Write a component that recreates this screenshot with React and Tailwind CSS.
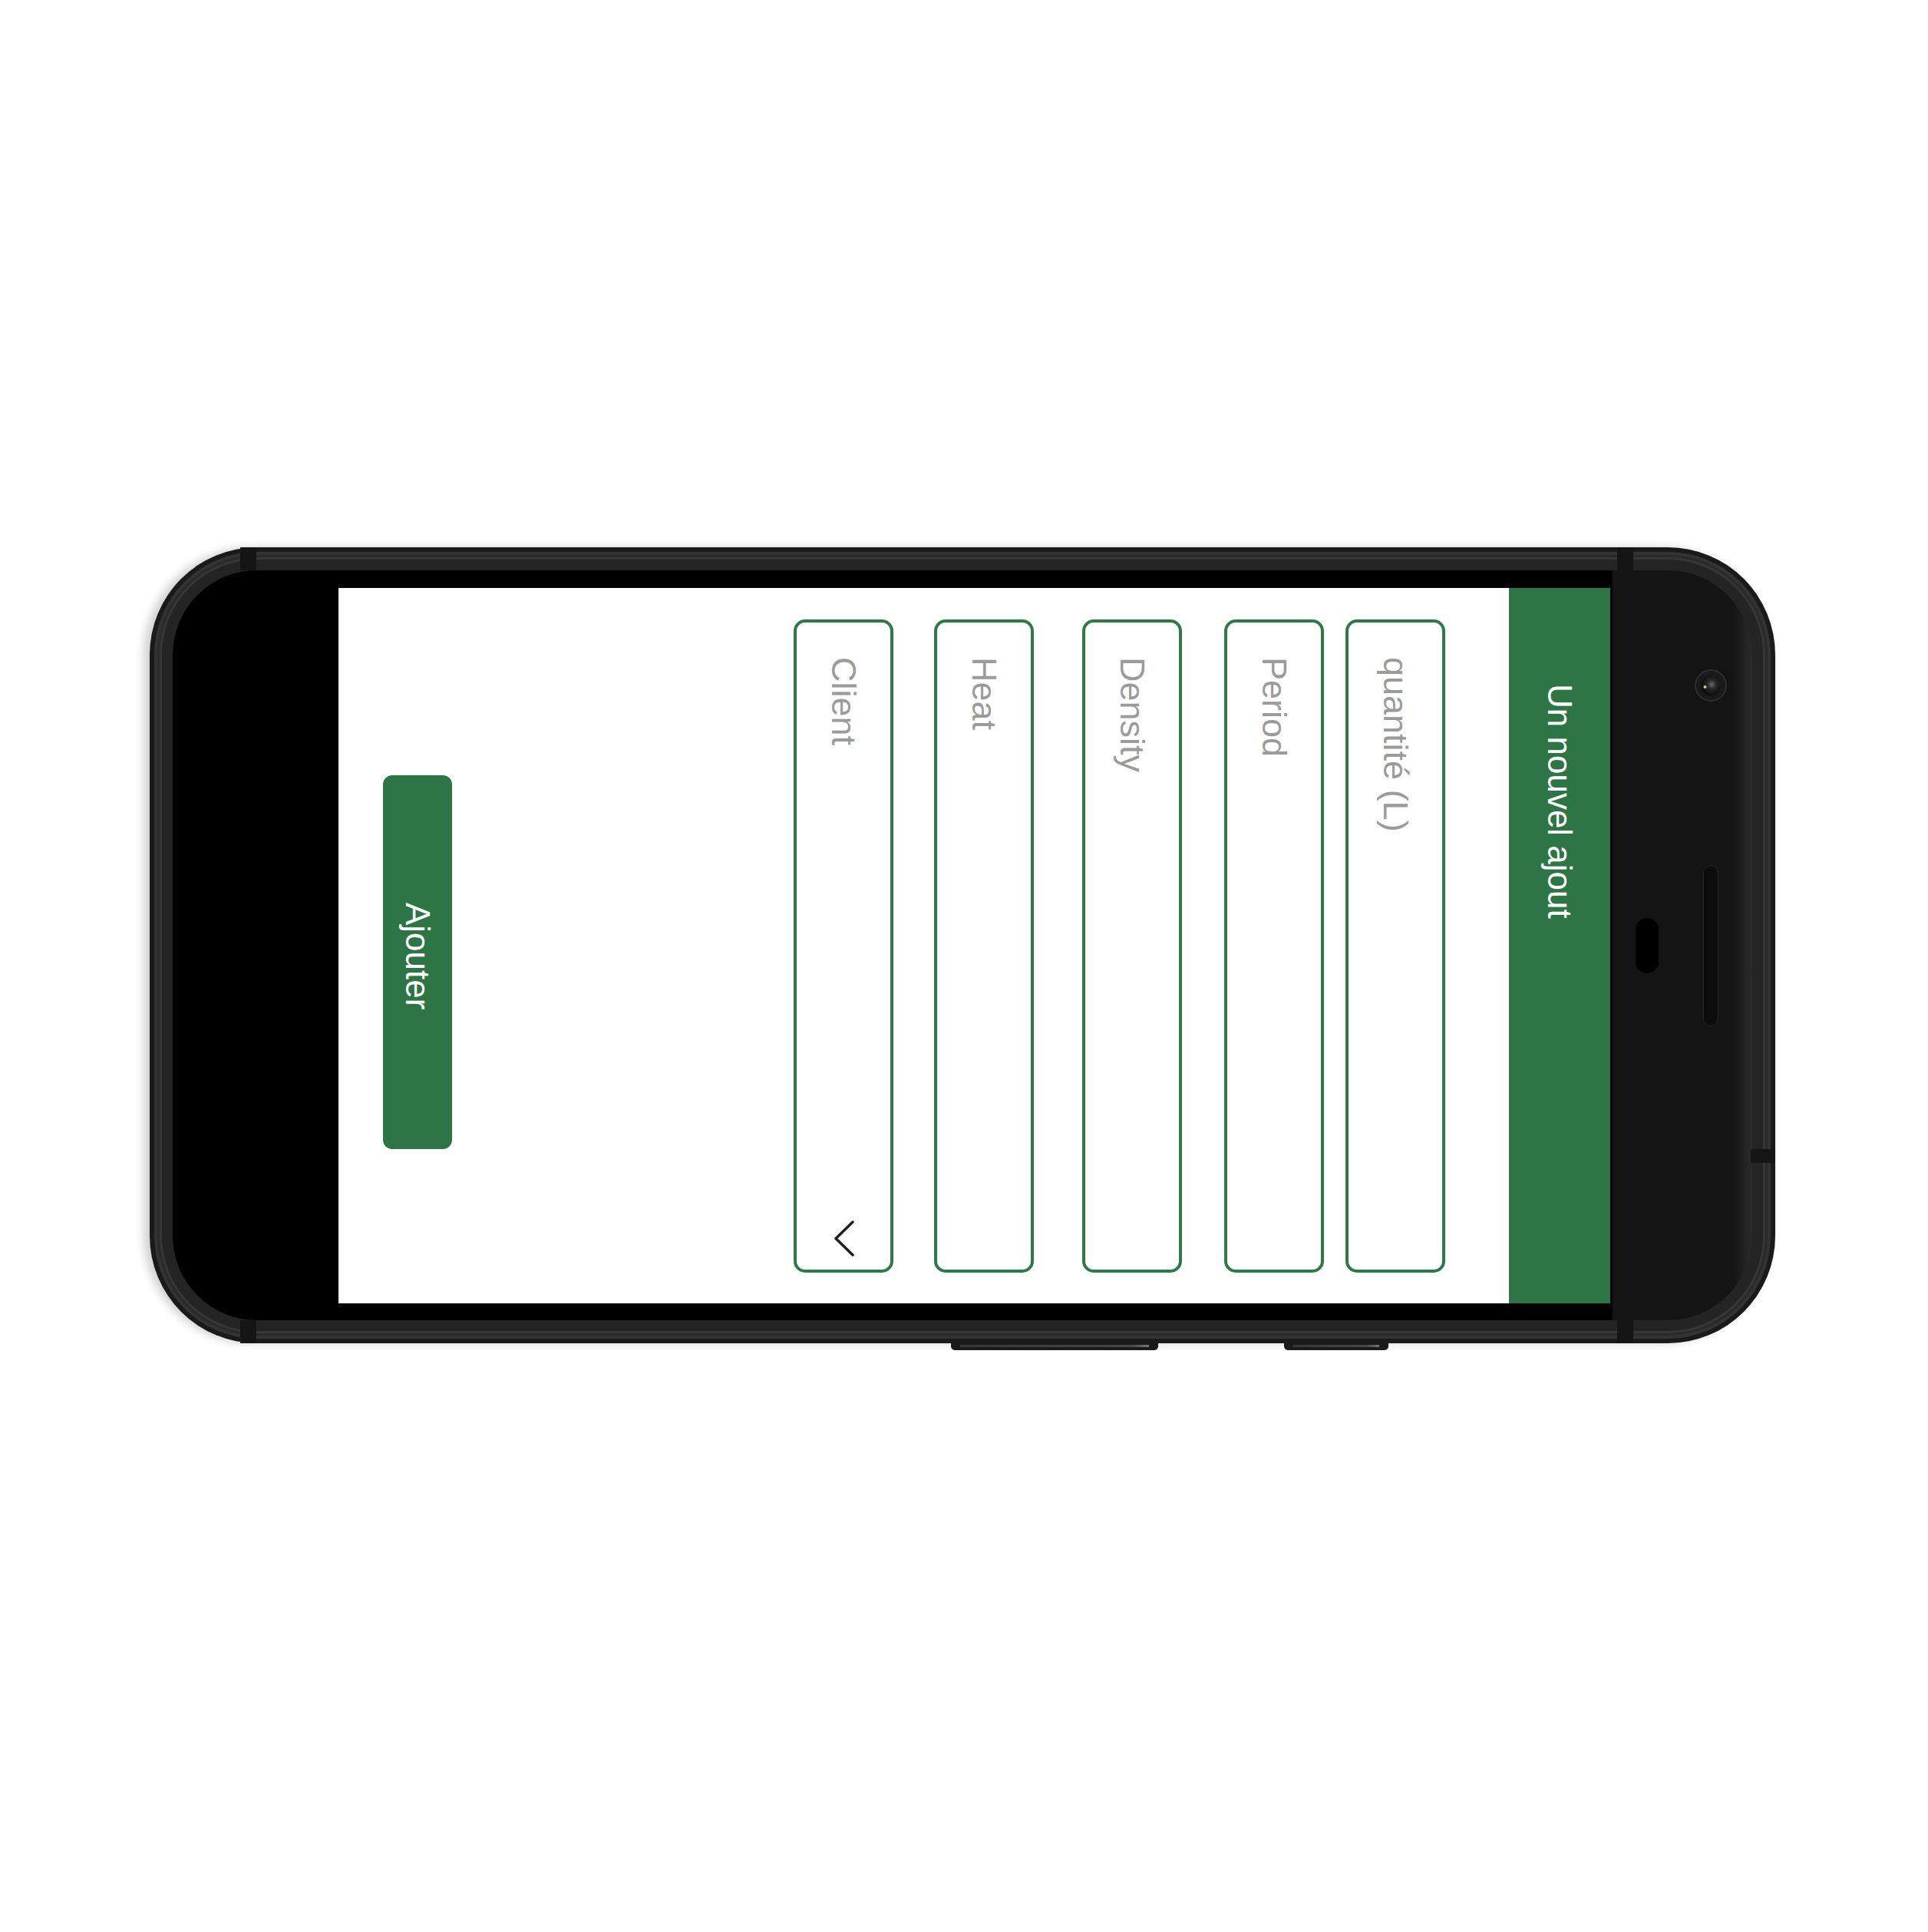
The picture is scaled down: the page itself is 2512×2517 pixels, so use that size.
import React from 'react';

const fields = [
  { label: "quantité (L)", gap: "mr-[83px]" },
  { label: "Period", gap: "mr-[28px]" },
  { label: "Density", gap: "mr-[55px]" },
  { label: "Heat", gap: "mr-[63px]" },
  { label: "Client", gap: "mr-[53px]", select: true },
];

function Camera() {
  return (
    <svg width="42" height="42" viewBox="0 0 42 42">
      <defs>
        <radialGradient id="lens" cx="0.55" cy="0.45" r="0.6">
          <stop offset="0" stopColor="#6a6a6a" />
          <stop offset="0.35" stopColor="#2a2a2a" />
          <stop offset="1" stopColor="#070707" />
        </radialGradient>
      </defs>
      <circle cx="21" cy="21" r="20" fill="#1a1a1a" stroke="#2e2e2e" strokeWidth="2" />
      <circle cx="21" cy="21" r="13" fill="url(#lens)" />
      <circle cx="13.5" cy="23" r="2" fill="#c9d27a" />
    </svg>
  );
}

function Field({ label, gap, select }) {
  return (
    <div className={`shrink-0 w-[130px] h-[851px] mt-[41px] ${gap} border-[4px] border-[#2e7a45] rounded-[15px] flex items-center justify-between pt-[45px] pb-[17px]`}>
      <span className="text-[45px] leading-none text-[#9b9b9b]">{label}</span>
      {select && (
        <svg width="27" height="47" viewBox="0 0 27 47">
          <path d="M25 2 L3 23.5 L25 45" fill="none" stroke="#1f1f1f" strokeWidth="3.5" strokeLinecap="round" strokeLinejoin="round" />
        </svg>
      )}
    </div>
  );
}

export default function App() {
  return (
    <div className="w-[2512px] h-[2517px] bg-white pt-[713px] pl-[195px] font-['Liberation_Sans',Arial,sans-serif]">
      <div className="relative w-[2118px] h-[1037px]">
        {/* frame */}
        <div className="h-full rounded-[140px] bg-[#1a1a1a] p-[6px] shadow-[-8px_0_12px_rgba(0,0,0,0.18)]">
          <div className="h-full rounded-[134px] bg-[#333333] p-[4px]">
            <div className="h-full rounded-[130px] bg-[#2a2a2a] p-[3px]">
              <div className="h-full rounded-[127px] bg-[#363636] p-[3px]">
                <div className="h-full rounded-[124px] bg-[#242424] p-[14px]">
                  <div className="h-full rounded-[110px] overflow-hidden flex">
                    {/* screen side */}
                    <div className="bg-black pl-[216px] pr-[3px] pt-[23px] pb-[22px]">
                      <div className="w-[1657px] h-[932px] bg-white flex flex-col [writing-mode:vertical-rl]">
                        <div className="shrink-0 w-[132px] bg-[#2e7545] pt-[125px] flex items-center text-white text-[44px] leading-none">
                          Un nouvel ajout
                        </div>
                        {fields.map((f) => (
                          <Field key={f.label} {...f} />
                        ))}
                        <button className="shrink-0 w-[90px] h-[487px] mt-[244px] mr-[445px] rounded-[12px] bg-[#2e7545] text-white text-[44px] leading-none flex items-center justify-center pb-[16px]">
                          Ajouter
                        </button>
                      </div>
                    </div>
                    {/* top bezel with camera and sensors */}
                    <div className="flex-1 flex pl-[30px] bg-[linear-gradient(to_right,#141414_86%,#2b2b2b)]">
                      <div className="shrink-0 w-[30px] h-[72px] mt-[453px] rounded-full bg-black" />
                      <div className="ml-[47px] w-[42px] flex flex-col items-center">
                        <div className="mt-[129px]">
                          <Camera />
                        </div>
                        <div className="mt-[213px] w-[20px] h-[210px] rounded-full bg-[#0c0c0c] border border-[#262626]" />
                      </div>
                    </div>
                  </div>
                </div>
              </div>
            </div>
          </div>
        </div>
        {/* antenna seams */}
        <div className="absolute left-[118px] top-0 w-[21px] h-[30px] bg-[#151515]" />
        <div className="absolute left-[1912px] top-0 w-[21px] h-[30px] bg-[#151515]" />
        <div className="absolute left-[118px] bottom-0 w-[21px] h-[30px] bg-[#151515]" />
        <div className="absolute left-[1912px] bottom-0 w-[21px] h-[30px] bg-[#151515]" />
        <div className="absolute right-0 top-[784px] w-[32px] h-[18px] bg-[#151515]" />
      </div>
      {/* side buttons */}
      <div className="flex pl-[1044px] gap-[164px]">
        <div className="w-[270px] h-[9px] rounded-b-[5px] bg-[#1c1c1c] px-[12px] pt-[2px]">
          <div className="h-[3px] bg-[linear-gradient(to_right,#3a3a3a,#4a4a4a_90%,#7a7a7a)]" />
        </div>
        <div className="w-[136px] h-[9px] rounded-b-[5px] bg-[#1c1c1c] px-[12px] pt-[2px]">
          <div className="h-[3px] bg-[linear-gradient(to_right,#3a3a3a,#4a4a4a_85%,#7a7a7a)]" />
        </div>
      </div>
    </div>
  );
}
